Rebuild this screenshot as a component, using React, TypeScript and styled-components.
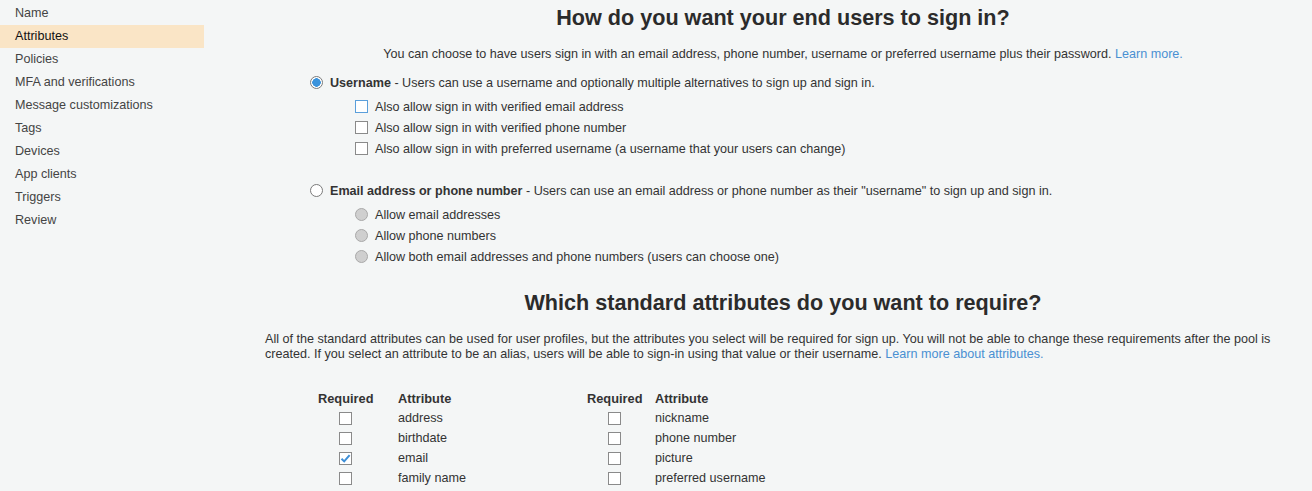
import { createGlobalStyle } from "styled-components";
import styled from "styled-components";

const GlobalStyle = createGlobalStyle`
  body {
    margin: 0;
    background: #f4f6f6;
    font-family: "Liberation Sans", Arial, sans-serif;
    font-size: 12.6px;
    color: #333;
  }
`;

const navItems = [
  "Name",
  "Attributes",
  "Policies",
  "MFA and verifications",
  "Message customizations",
  "Tags",
  "Devices",
  "App clients",
  "Triggers",
  "Review",
];

const leftAttrs = [
  { name: "address", checked: false },
  { name: "birthdate", checked: false },
  { name: "email", checked: true },
  { name: "family name", checked: false },
];

const rightAttrs = [
  { name: "nickname", checked: false },
  { name: "phone number", checked: false },
  { name: "picture", checked: false },
  { name: "preferred username", checked: false },
];

const Page = styled.div`
  display: flex;
  height: 491px;
  overflow: hidden;
`;

const Sidebar = styled.nav`
  width: 204px;
  flex-shrink: 0;
  padding-top: 2px;
`;

const NavItem = styled.div<{ active?: boolean }>`
  height: 23px;
  line-height: 23px;
  padding-left: 15px;
  color: ${({ active }) => (active ? "#111" : "#444")};
  background: ${({ active }) => (active ? "#fae5c6" : "transparent")};
`;

const Main = styled.main`
  margin-left: 61px;
  width: 1036px;
`;

const Heading = styled.h2<{ top: number }>`
  margin: ${({ top }) => top}px 0 0;
  text-align: center;
  font-family: "Liberation Sans", Arial, sans-serif;
  font-size: 21.6px;
  line-height: 24px;
  font-weight: bold;
  color: #2b2b2b;
`;

const Lead = styled.p`
  margin: 16px 0 0;
  text-align: center;
  line-height: 16px;
`;

const Link = styled.a`
  color: #4a90d2;
  text-decoration: none;
`;

const Options = styled.div`
  margin-top: 10px;
  padding-left: 45px;
`;

const OptionGroup = styled.div<{ gap?: number }>`
  margin-top: ${({ gap }) => gap ?? 0}px;
`;

const OptionRow = styled.label`
  display: flex;
  align-items: center;
  height: 21px;
  gap: 7px;
`;

const SubOptions = styled.div`
  padding-left: 45px;
  margin-top: 3px;
`;

const Radio = styled.span<{ checked?: boolean; disabled?: boolean }>`
  width: 13px;
  height: 13px;
  box-sizing: border-box;
  border-radius: 50%;
  flex-shrink: 0;
  border: 1px solid ${({ disabled }) => (disabled ? "#a9a9a9" : "#7a7a7a")};
  background: ${({ checked, disabled }) =>
    disabled
      ? "#cfcfcf"
      : checked
      ? "radial-gradient(circle, #3a93dc 0 4px, #fff 4.5px)"
      : "#fff"};
`;

const Checkbox = styled.span<{ focused?: boolean }>`
  width: 13px;
  height: 13px;
  box-sizing: border-box;
  flex-shrink: 0;
  background: #fff;
  border: 1px solid ${({ focused }) => (focused ? "#5a9fdb" : "#8a8a8a")};
  display: flex;
  align-items: center;
  justify-content: center;
`;

const Strong = styled.b`
  font-weight: bold;
`;

const Paragraph = styled.p`
  margin: 17px 0 0;
  line-height: 15px;
`;

const Tables = styled.div`
  display: flex;
  margin-top: 27px;
  padding-left: 53px;
`;

const AttrTable = styled.div<{ first: number; second: number }>`
  display: grid;
  grid-template-columns: ${({ first, second }) => `${first}px ${second}px`};
  grid-template-rows: 19px;
  grid-auto-rows: 20px;
  align-items: center;
`;

const HeadCell = styled.div`
  font-weight: bold;
  font-size: 12.8px;
`;

const CheckCell = styled.div`
  display: flex;
  justify-content: center;
  width: 55px;
`;

const Check = () => (
  <svg width="11" height="11" viewBox="0 0 11 11">
    <path
      d="M1.5 5.8 L4.2 8.4 L9.6 2.2"
      fill="none"
      stroke="#3d8ed6"
      strokeWidth="2"
    />
  </svg>
);

const Table = ({
  rows,
  first,
  second,
}: {
  rows: { name: string; checked: boolean }[];
  first: number;
  second: number;
}) => (
  <AttrTable first={first} second={second}>
    <HeadCell>Required</HeadCell>
    <HeadCell>Attribute</HeadCell>
    {rows.map((r) => [
      <CheckCell key={r.name + "-check"}>
        <Checkbox>{r.checked && <Check />}</Checkbox>
      </CheckCell>,
      <div key={r.name}>{r.name}</div>,
    ])}
  </AttrTable>
);

export default function App() {
  return (
    <>
      <GlobalStyle />
      <Page>
        <Sidebar>
          {navItems.map((item) => (
            <NavItem key={item} active={item === "Attributes"}>
              {item}
            </NavItem>
          ))}
        </Sidebar>
        <Main>
          <Heading top={6}>How do you want your end users to sign in?</Heading>
          <Lead>
            You can choose to have users sign in with an email address, phone
            number, username or preferred username plus their password.{" "}
            <Link href="#">Learn more.</Link>
          </Lead>
          <Options>
            <OptionGroup>
              <OptionRow>
                <Radio checked />
                <span>
                  <Strong>Username</Strong> - Users can use a username and
                  optionally multiple alternatives to sign up and sign in.
                </span>
              </OptionRow>
              <SubOptions>
                <OptionRow>
                  <Checkbox focused />
                  Also allow sign in with verified email address
                </OptionRow>
                <OptionRow>
                  <Checkbox />
                  Also allow sign in with verified phone number
                </OptionRow>
                <OptionRow>
                  <Checkbox />
                  Also allow sign in with preferred username (a username that
                  your users can change)
                </OptionRow>
              </SubOptions>
            </OptionGroup>
            <OptionGroup gap={21}>
              <OptionRow>
                <Radio />
                <span>
                  <Strong>Email address or phone number</Strong> - Users can use
                  an email address or phone number as their "username" to sign
                  up and sign in.
                </span>
              </OptionRow>
              <SubOptions>
                <OptionRow>
                  <Radio disabled />
                  Allow email addresses
                </OptionRow>
                <OptionRow>
                  <Radio disabled />
                  Allow phone numbers
                </OptionRow>
                <OptionRow>
                  <Radio disabled />
                  Allow both email addresses and phone numbers (users can choose
                  one)
                </OptionRow>
              </SubOptions>
            </OptionGroup>
          </Options>
          <Heading top={24}>Which standard attributes do you want to require?</Heading>
          <Paragraph>
            All of the standard attributes can be used for user profiles, but
            the attributes you select will be required for sign up. You will not
            be able to change these requirements after the pool is created. If
            you select an attribute to be an alias, users will be able to
            sign-in using that value or their username.{" "}
            <Link href="#">Learn more about attributes.</Link>
          </Paragraph>
          <Tables>
            <Table rows={leftAttrs} first={80} second={189} />
            <Table rows={rightAttrs} first={68} second={200} />
          </Tables>
        </Main>
      </Page>
    </>
  );
}
